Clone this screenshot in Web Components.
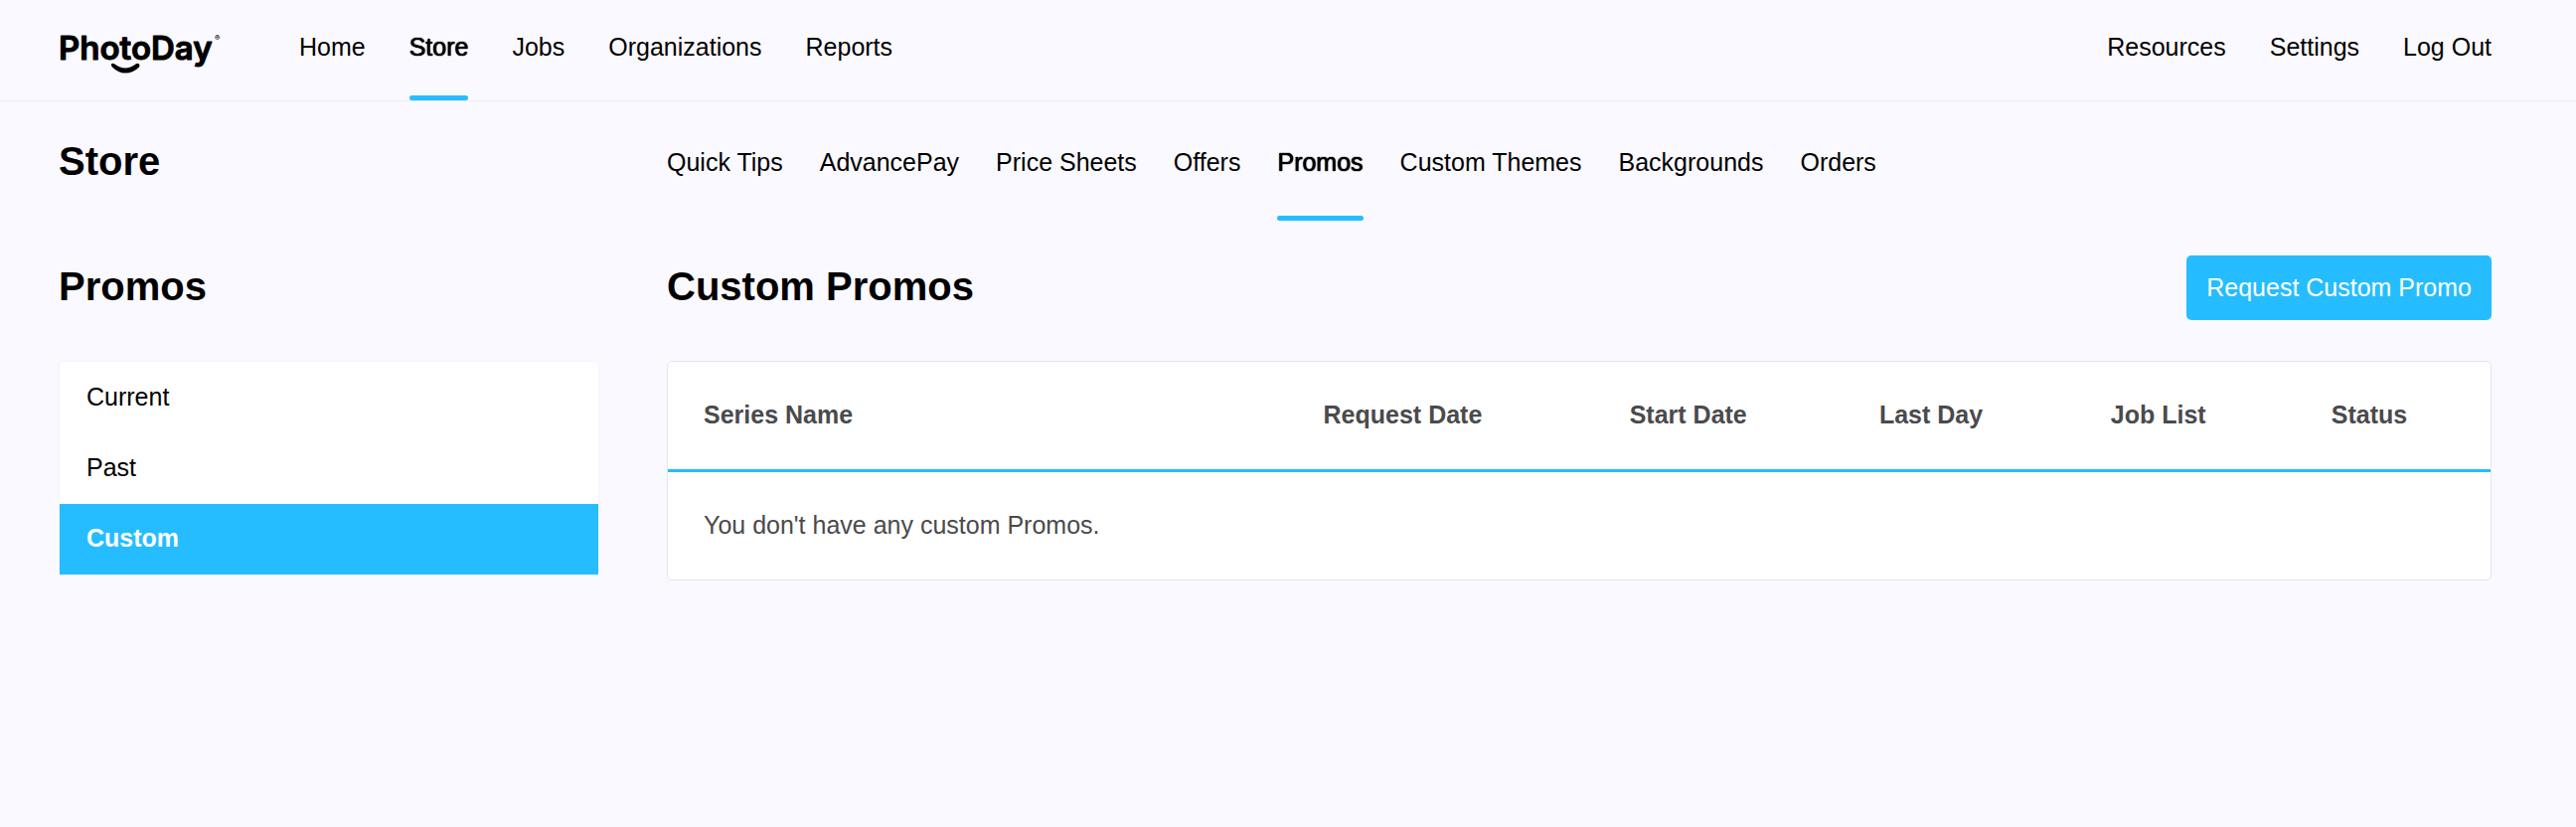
<!DOCTYPE html>
<html lang="en">
<head>
<meta charset="utf-8">
<meta name="viewport" content="width=device-width, initial-scale=1">
<title>PhotoDay – Custom Promos</title>
<style>
  :root {
    --accent: #25bdff;
    --page: #faf9ff;
    --line: #e6e6e8;
    --muted: #4a4a4d;
    --edge-left: 59px;
    --edge-right: 85px;
  }
  body {
    margin: 0;
    min-height: 100vh;
    background: var(--page);
    color: #000;
    font: 25px/30px "Liberation Sans", Arial, sans-serif;
  }
</style>
</head>
<body>
<pd-header>
  <pd-logo slot="logo"></pd-logo>
  <pd-tab>Home</pd-tab>
  <pd-tab active>Store</pd-tab>
  <pd-tab>Jobs</pd-tab>
  <pd-tab>Organizations</pd-tab>
  <pd-tab>Reports</pd-tab>
  <pd-tab slot="account">Resources</pd-tab>
  <pd-tab slot="account">Settings</pd-tab>
  <pd-tab slot="account">Log Out</pd-tab>
</pd-header>
<pd-section-bar heading="Store">
  <pd-tab>Quick Tips</pd-tab>
  <pd-tab>AdvancePay</pd-tab>
  <pd-tab>Price Sheets</pd-tab>
  <pd-tab>Offers</pd-tab>
  <pd-tab active>Promos</pd-tab>
  <pd-tab>Custom Themes</pd-tab>
  <pd-tab>Backgrounds</pd-tab>
  <pd-tab>Orders</pd-tab>
</pd-section-bar>
<pd-columns>
  <pd-panel slot="side" heading="Promos">
    <pd-menu>
      <pd-menu-item>Current</pd-menu-item>
      <pd-menu-item>Past</pd-menu-item>
      <pd-menu-item active>Custom</pd-menu-item>
    </pd-menu>
  </pd-panel>
  <pd-panel heading="Custom Promos">
    <pd-button slot="action">Request Custom Promo</pd-button>
    <pd-promo-table></pd-promo-table>
  </pd-panel>
</pd-columns>

<script>
const define = (name, render) => customElements.define(name, class extends HTMLElement {
  connectedCallback() {
    if (this.shadowRoot) return;
    this.attachShadow({ mode: "open" }).innerHTML = render(this);
  }
});

define("pd-logo", () => `
  <style>
    :host { display: block; width: 168px; flex: none; }
    a { display: block; color: #000; text-decoration: none; }
    svg { display: block; }
    .name { font: 600 33px Inter, sans-serif; stroke: #000; stroke-width: 1px; stroke-linejoin: round; }
    .mark { font: 700 8px Inter, sans-serif; }
  </style>
  <a href="#home" aria-label="PhotoDay">
    <svg width="168" height="60" viewBox="0 0 168 60">
      <text class="name" x="0" y="43">PhotoDay</text>
      <text class="mark" x="157" y="24">®</text>
      <path d="M53 47.500Q52.500 49 54 50.500Q60 56.500 67 56.500Q75 56.500 81 50.500Q82 49 81 47.500Q79.500 46 77.500 47.500Q72 51.500 67 51.500Q62 51.500 56.500 47.500Q54.500 46 53 47.500Z"/>
    </svg>
  </a>`);

define("pd-tab", el => `
  <style>
    :host { display: block; white-space: nowrap; }
    a { display: block; color: #000; text-decoration: none; }
    span { display: block; padding: var(--tab-top) 0 var(--tab-bottom); }
    i { display: block; height: 5px; border-radius: 3px; }
    a[aria-current] { text-shadow: 0 0 1px #000, 0 0 1px #000; }
    a[aria-current] i { background: var(--accent); }
  </style>
  <a href="#" ${el.hasAttribute("active") ? 'aria-current="page"' : ""}><span><slot></slot></span><i></i></a>`);

define("pd-header", () => `
  <style>
    :host { display: block; border-bottom: 1px solid #ededf2; --tab-top: 32px; --tab-bottom: 34px; }
    header { display: flex; padding: 0 var(--edge-right) 0 var(--edge-left); }
    .brand { margin: 17px 74px 0 0; }
    nav { display: flex; gap: 44px; }
    .account { margin-left: auto; }
  </style>
  <header>
    <div class="brand"><slot name="logo"></slot></div>
    <nav aria-label="Main"><slot></slot></nav>
    <nav class="account" aria-label="Account"><slot name="account"></slot></nav>
  </header>`);

define("pd-section-bar", el => `
  <style>
    :host {
      display: grid; grid-template-columns: minmax(0, 8fr) minmax(0, 27fr); column-gap: 68px;
      padding: 0 var(--edge-right) 0 var(--edge-left);
      --tab-top: 46px; --tab-bottom: 39px;
    }
    h1 { margin: 36px 0 0; font-size: 40px; line-height: 48px; }
    nav { display: flex; gap: 37px; }
  </style>
  <h1>${el.getAttribute("heading")}</h1>
  <nav aria-label="Store"><slot></slot></nav>`);

define("pd-columns", () => `
  <style>
    :host {
      display: grid; grid-template-columns: minmax(0, 8fr) minmax(0, 27fr); column-gap: 68px;
      padding: 35px var(--edge-right) 60px var(--edge-left);
    }
  </style>
  <aside><slot name="side"></slot></aside>
  <main><slot></slot></main>`);

define("pd-panel", el => `
  <style>
    :host { display: block; }
    .top { display: flex; justify-content: space-between; align-items: flex-start; min-height: 65px; margin-bottom: 41px; }
    h2 { margin: 7px 0 0; font-size: 40px; line-height: 48px; }
  </style>
  <div class="top"><h2>${el.getAttribute("heading")}</h2><slot name="action"></slot></div>
  <slot></slot>`);

define("pd-button", () => `
  <style>
    :host { display: block; }
    button {
      display: block; margin: 0; padding: 17px 20px 18px; border: 0; border-radius: 5px;
      background: var(--accent); color: #fff; font: inherit; white-space: nowrap; cursor: pointer;
    }
  </style>
  <button type="button"><slot></slot></button>`);

define("pd-menu", () => `
  <style>
    :host { display: block; }
    nav { padding-top: 1px; border: 1px solid #f4f3f8; border-bottom: 0; border-radius: 5px 5px 0 0; background: #fff; }
  </style>
  <nav aria-label="Promos"><slot></slot></nav>`);

define("pd-menu-item", el => `
  <style>
    :host { display: block; }
    a { display: block; padding: 19px 27px 22px; color: #000; text-decoration: none; }
    a[aria-current] { background: var(--accent); color: #fff; font-weight: 700; }
  </style>
  <a href="#" ${el.hasAttribute("active") ? 'aria-current="page"' : ""}><slot></slot></a>`);

define("pd-promo-table", () => `
  <style>
    :host { display: block; border: 1px solid var(--line); border-radius: 5px; background: #fff; color: var(--muted); }
    table { width: 100%; table-layout: fixed; border-collapse: separate; border-spacing: 0; }
    th, td { padding: 38px 0 40px 36px; text-align: left; white-space: nowrap; }
    th { border-bottom: 3px solid var(--accent); font-weight: 700; }
  </style>
  <table>
    <colgroup>
      <col style="width:34%"><col style="width:16.8%"><col style="width:13.7%">
      <col style="width:12.7%"><col style="width:12.1%"><col style="width:10.7%">
    </colgroup>
    <thead>
      <tr>
        <th scope="col">Series Name</th><th scope="col">Request Date</th><th scope="col">Start Date</th>
        <th scope="col">Last Day</th><th scope="col">Job List</th><th scope="col">Status</th>
      </tr>
    </thead>
    <tbody><tr><td colspan="6">You don't have any custom Promos.</td></tr></tbody>
  </table>`);
</script>
</body>
</html>
